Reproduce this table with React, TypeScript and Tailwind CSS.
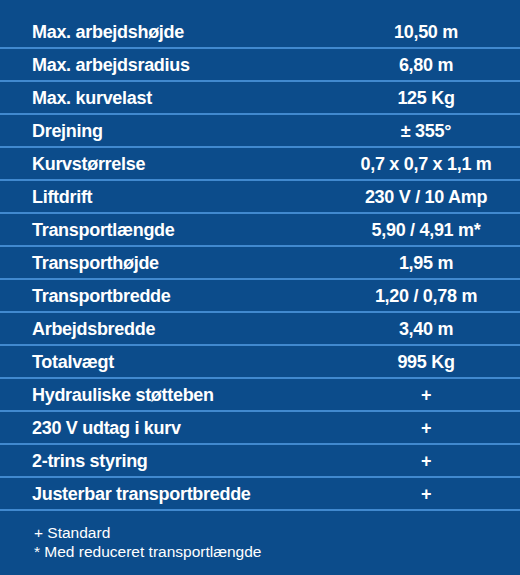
const rows: [string, string][] = [
  ["Max. arbejdshøjde", "10,50 m"],
  ["Max. arbejdsradius", "6,80 m"],
  ["Max. kurvelast", "125 Kg"],
  ["Drejning", "± 355°"],
  ["Kurvstørrelse", "0,7 x 0,7 x 1,1 m"],
  ["Liftdrift", "230 V / 10 Amp"],
  ["Transportlængde", "5,90 / 4,91 m*"],
  ["Transporthøjde", "1,95 m"],
  ["Transportbredde", "1,20 / 0,78 m"],
  ["Arbejdsbredde", "3,40 m"],
  ["Totalvægt", "995 Kg"],
  ["Hydrauliske støtteben", "+"],
  ["230 V udtag i kurv", "+"],
  ["2-trins styring", "+"],
  ["Justerbar transportbredde", "+"],
];

export default function App() {
  return (
    <div className="w-[520px] h-[575px] bg-[#0c4c8b] pt-[16px] text-white overflow-hidden">
      <div className="flex flex-col">
        {rows.map(([label, value]) => (
          <div
            key={label}
            className="flex h-[33px] items-center pt-px border-b-2 border-[#4189cf] font-bold text-[18px] tracking-[-0.3px] font-['Liberation_Sans',Arial,sans-serif]"
          >
            <div className="w-[332px] pl-8">{label}</div>
            <div className="flex-1 text-center">{value}</div>
          </div>
        ))}
      </div>
      <div className="mt-[12px] pl-[34px] text-[15.5px] leading-[19px] font-['Liberation_Sans',Arial,sans-serif]">
        <p>+ Standard</p>
        <p>* Med reduceret transportlængde</p>
      </div>
    </div>
  );
}
